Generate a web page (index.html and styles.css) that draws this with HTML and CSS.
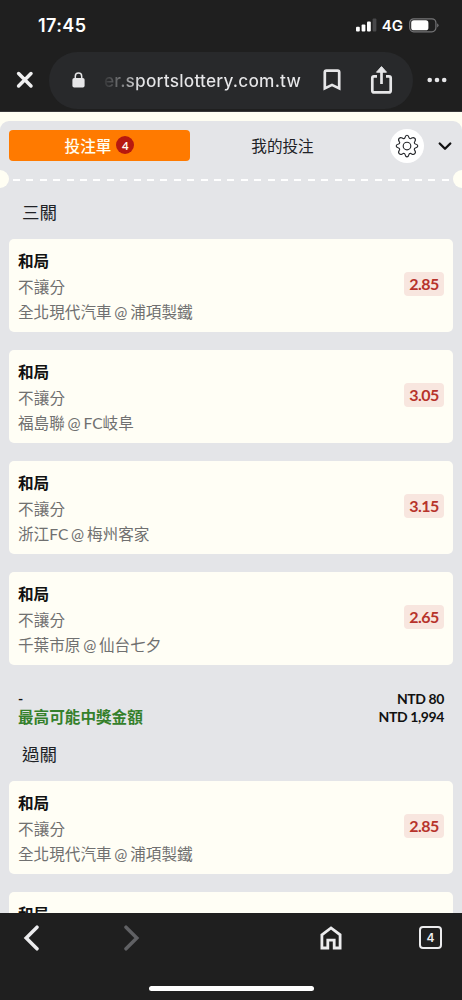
FILE: index.html
```html
<!DOCTYPE html>
<html lang="zh-Hant">
<head>
<meta charset="utf-8">
<meta name="viewport" content="width=device-width, initial-scale=1">
<title>投注單</title>
<link rel="stylesheet" href="styles.css">
</head>
<body>
<div class="phone">
  <header class="status">
    <span class="clock">17:45</span>
    <div class="signals">
      <svg class="bars" width="21" height="14" viewBox="0 0 21 14"><rect x="0" y="8.8" width="3.8" height="4.6" rx="1" fill="#fff"/><rect x="5.6" y="6.4" width="3.8" height="7" rx="1" fill="#fff"/><rect x="11" y="3.6" width="3.8" height="9.8" rx="1" fill="#fff"/><rect x="16.6" y="0.6" width="3.8" height="12.8" rx="1" fill="#48484a"/></svg>
      <span class="network">4G</span>
      <svg width="30" height="15" viewBox="0 0 30 15"><rect x=".7" y=".8" width="26.2" height="13" rx="4" fill="none" stroke="#757577" stroke-width="1.2"/><rect x="2.2" y="2.3" width="17.2" height="10" rx="2.6" fill="#fff"/><path d="M28.2 5.2v4.2q1.3-.8 1.3-2.1t-1.3-2.1z" fill="#757577"/></svg>
    </div>
  </header>

  <div class="toolbar">
    <svg class="close" width="18" height="18" viewBox="0 0 18 18"><path d="M2.600 2.600l12.400 12.400M15 2.600L2.600 15" stroke="#f0f0f1" stroke-width="3.500" stroke-linecap="round"/></svg>
    <div class="address">
      <svg class="lock" width="13" height="16" viewBox="0 0 13 16"><path d="M3.3 7V4.2a3.2 3.2 0 0 1 6.4 0V7" fill="none" stroke="#e6e6e8" stroke-width="1.5"/><rect x=".4" y="6" width="12.2" height="9.6" rx="1.8" fill="#e6e6e8"/></svg>
      <span class="url">er.sportslottery.com.tw</span>
      <svg class="bookmark" width="18" height="22" viewBox="0 0 18 22"><path d="M1.800 3.200Q1.800 1.600 3.400 1.600H14.600Q16.200 1.600 16.200 3.200V19.400L9 15.900 1.800 19.400z" fill="none" stroke="#e6e6e8" stroke-width="2.700"/></svg>
      <svg class="share" width="23" height="30" viewBox="0 0 23 30"><path d="M7 11.4H4Q2.3 11.4 2.3 13V25.4Q2.3 27.4 4.2 27.4H18.8Q20.7 27.4 20.7 25.4V13Q20.7 11.4 19 11.4H16M11.5 19V4" fill="none" stroke="#e6e6e8" stroke-width="2.7"/><path d="M6.5 7.2L11.5 1.6 16.5 7.2z" fill="#e6e6e8" stroke="#e6e6e8" stroke-width="1" stroke-linejoin="round"/></svg>
    </div>
    <svg class="more" width="20" height="6" viewBox="0 0 20 6"><g fill="#e6e6e8"><circle cx="2.7" cy="3" r="2.3"/><circle cx="10" cy="3" r="2.3"/><circle cx="17.2" cy="3" r="2.3"/></g></svg>
  </div>

  <main class="page">
    <div class="slip">
      <nav class="tabs">
        <div class="tab tab-active">投注單<span class="count">4</span></div>
        <div class="tab">我的投注</div>
        <div class="settings">
          <svg width="24" height="24" viewBox="0 0 24 24" fill="none" stroke="#26282c" stroke-width="1.15" stroke-linejoin="round"><path d="M10 3.600Q10.500 1.200 12 1.200T14 3.600Q14.200 4.600 15.300 4.700 16 4.600 16.600 4.100 18.600 2.900 19.700 4.300 21.100 5.400 19.900 7.400 19.200 8.100 19.400 8.900 19.600 9.800 20.400 10 22.800 10.500 22.800 12T20.400 14Q19.400 14.200 19.300 15.300 19.400 16 19.900 16.600 21.100 18.600 19.700 19.700 18.600 21.100 16.600 19.900 15.900 19.200 15.100 19.400 14.200 19.600 14 20.400 13.500 22.800 12 22.800T10 20.400Q9.800 19.400 8.700 19.300 8 19.400 7.400 19.900 5.400 21.100 4.300 19.700 2.900 18.600 4.100 16.600 4.800 15.900 4.600 15.100 4.400 14.200 3.600 14 1.200 13.500 1.200 12T3.600 10Q4.600 9.800 4.700 8.700 4.600 8 4.100 7.400 2.900 5.400 4.300 4.300 5.400 2.900 7.400 4.100 8.100 4.800 8.900 4.600 9.800 4.400 10 3.600z"/><circle cx="12" cy="12" r="3.8"/></svg>
        </div>
        <svg class="chevron" width="14" height="10" viewBox="0 0 14 10"><path d="M1.700 2.500L7 7.800 12.300 2.500" fill="none" stroke="#111" stroke-width="2.300" stroke-linecap="round" stroke-linejoin="round"/></svg>
      </nav>

      <div class="perforation">
        <span class="notch"></span>
        <span class="dashes"></span>
        <span class="notch"></span>
      </div>

      <section class="group">
        <h2 class="group-title">三關</h2>
        <div class="cards">
          <article class="card"><div class="info"><strong class="pick">和局</strong><span class="market">不讓分</span><span class="match">全北現代汽車 @ 浦項製鐵</span></div><span class="odds">2.85</span></article>
          <article class="card"><div class="info"><strong class="pick">和局</strong><span class="market">不讓分</span><span class="match">福島聯 @ FC岐阜</span></div><span class="odds">3.05</span></article>
          <article class="card"><div class="info"><strong class="pick">和局</strong><span class="market">不讓分</span><span class="match">浙江FC @ 梅州客家</span></div><span class="odds">3.15</span></article>
          <article class="card"><div class="info"><strong class="pick">和局</strong><span class="market">不讓分</span><span class="match">千葉市原 @ 仙台七夕</span></div><span class="odds">2.65</span></article>
        </div>
        <div class="totals">
          <div class="total"><span>-</span><span>NTD 80</span></div>
          <div class="total"><span class="payout">最高可能中獎金額</span><span>NTD 1,994</span></div>
        </div>
      </section>

      <section class="group">
        <h2 class="group-title group-title-next">過關</h2>
        <div class="cards">
          <article class="card"><div class="info"><strong class="pick">和局</strong><span class="market">不讓分</span><span class="match">全北現代汽車 @ 浦項製鐵</span></div><span class="odds">2.85</span></article>
          <article class="card"><div class="info"><strong class="pick">和局</strong></div></article>
        </div>
      </section>
    </div>
  </main>

  <footer class="browser-nav">
    <div class="nav-icons">
      <svg class="back" width="18" height="26" viewBox="0 0 18 26"><path d="M14 2.200L3.200 13 14 23.800" fill="none" stroke="#ececee" stroke-width="3.500" stroke-linecap="round"/></svg>
      <svg class="forward" width="18" height="26" viewBox="0 0 18 26"><path d="M4 2.200L14.800 13 4 23.800" fill="none" stroke="#606164" stroke-width="3.500" stroke-linecap="round"/></svg>
      <svg class="home" width="22" height="24" viewBox="0 0 22 24"><path d="M1.900 8.800L11 2 20.100 8.800V22H14.200V14.200H7.800V22H1.900z" fill="none" stroke="#ececee" stroke-width="2.800"/></svg>
      <span class="tab-count">4</span>
    </div>
    <div class="home-indicator"></div>
  </footer>
</div>
</body>
</html>
```
FILE: styles.css
```css
* { box-sizing: border-box; }

body {
  margin: 0;
  background: #1f1f1f;
  font-family: Lato, "Noto Sans CJK TC", sans-serif;
}

svg { display: block; flex: none; }

.phone {
  display: flex;
  flex-direction: column;
  width: 462px;
  height: 1000px;
  overflow: hidden;
}

.status {
  display: flex;
  justify-content: space-between;
  align-items: center;
  flex: none;
  height: 52px;
  padding: 0 23px 2px 38px;
  color: #fff;
  font-family: Inter, sans-serif;
}

.clock { font-size: 18px; font-weight: 600; letter-spacing: 0.4px; }
.signals { display: flex; align-items: center; }
.network { margin: 0 6px 0 5px; font-size: 15px; font-weight: 600; }

.toolbar {
  display: flex;
  align-items: center;
  flex: none;
  height: 60px;
  padding: 0 15px 3px 16px;
  border-bottom: 1px solid #39393b;
}

.address {
  display: flex;
  align-items: center;
  width: 364px;
  height: 57px;
  margin: 0 14px 0 15px;
  padding-left: 23px;
  border-radius: 29px;
  background: #28292b;
}

.url {
  width: 200px;
  margin-left: 19px;
  font: 500 17.300px Inter, sans-serif;
  letter-spacing: 0.200px;
  white-space: nowrap;
  color: transparent;
  background: linear-gradient(90deg, #343537, #737476 16px, #e6e6e8 36px);
  background-clip: text;
  -webkit-background-clip: text;
}

.bookmark { margin-left: 19px; }
.share { margin-left: 29px; }

.page {
  flex: none;
  height: 801px;
  padding-top: 9px;
  overflow: hidden;
  background: #fffef3;
}

.slip {
  height: 900px;
  padding-top: 9px;
  border-radius: 9px 9px 0 0;
  background: #e4e5e8;
}

.tabs {
  display: flex;
  align-items: center;
  height: 31px;
  padding: 0 10px 0 9px;
}

.tab {
  display: flex;
  align-items: center;
  justify-content: center;
  width: 181px;
  height: 31px;
  padding-bottom: 1px;
  font-size: 15.600px;
  color: #202226;
}

.tab + .tab { margin-left: 2px; }

.tab-active {
  border-radius: 4px;
  background: #ff7a00;
  color: #fffdf0;
  font-weight: 500;
}

.count {
  display: flex;
  align-items: center;
  justify-content: center;
  width: 18px;
  height: 18px;
  margin-left: 5px;
  border-radius: 50%;
  background: #b7190f;
  font-size: 11.500px;
  font-weight: 700;
}

.settings {
  display: flex;
  align-items: center;
  justify-content: center;
  flex: none;
  width: 34px;
  height: 34px;
  margin-left: 17px;
  border-radius: 50%;
  background: #fff;
}

.chevron { margin-left: 14px; }

.perforation {
  display: flex;
  align-items: center;
  height: 18px;
  margin-top: 9px;
}

.notch {
  flex: none;
  width: 9px;
  height: 18px;
  border-radius: 0 9px 9px 0;
  background: #fffef3;
}

.notch:last-child { border-radius: 9px 0 0 9px; }

.dashes {
  flex: 1;
  height: 2px;
  margin: 2px 4px 0;
  background: repeating-linear-gradient(90deg, #fff 0 7px, transparent 7px 13.400px);
}

.group-title {
  height: 51px;
  margin: 0;
  padding-left: 22px;
  font-size: 17.500px;
  font-weight: 400;
  line-height: 50px;
  color: #202226;
}

.group-title-next { height: 55px; line-height: 57px; }

.cards {
  display: flex;
  flex-direction: column;
  gap: 18px;
  padding: 0 9px;
}

.card {
  display: flex;
  align-items: center;
  justify-content: space-between;
  height: 93px;
  padding: 0 9px;
  border-radius: 5px;
  background: #fffef5;
}

.info {
  display: flex;
  flex-direction: column;
  align-self: flex-start;
  padding-top: 10px;
  font-size: 15.600px;
  line-height: 25.600px;
  color: #707070;
}

.pick { color: #111; font-weight: 700; }
.market { letter-spacing: 0.200px; }
.match { word-spacing: -1.200px; }

.odds {
  width: 40px;
  height: 24px;
  margin-top: -4px;
  border-radius: 4px;
  background: #f8e6df;
  color: #b7332b;
  font-size: 16px;
  font-weight: 700;
  letter-spacing: -0.500px;
  line-height: 23px;
  text-align: center;
}

.totals { padding: 24px 18px 1px; }

.total {
  display: flex;
  justify-content: space-between;
  align-items: center;
  height: 18px;
  color: #111;
  font-size: 14px;
  font-weight: 700;
  letter-spacing: -0.400px;
}

.payout { color: #35802b; font-size: 15.600px; letter-spacing: 0; }

.browser-nav {
  display: flex;
  flex-direction: column;
  align-items: center;
  flex: none;
  height: 87px;
  background: #1f1f1f;
}

.nav-icons {
  display: flex;
  align-items: center;
  width: 100%;
  height: 49px;
  padding: 0 20px 0 23px;
}

.forward { margin-left: 81px; }
.home { margin-left: 180px; }

.tab-count {
  display: flex;
  align-items: center;
  justify-content: center;
  width: 23px;
  height: 23px;
  margin-left: auto;
  border: 2px solid #ececee;
  border-radius: 4px;
  color: #ececee;
  font: 600 12px Inter, sans-serif;
}

.home-indicator {
  width: 165px;
  height: 5px;
  margin-top: 24px;
  border-radius: 3px;
  background: #fff;
}
```
